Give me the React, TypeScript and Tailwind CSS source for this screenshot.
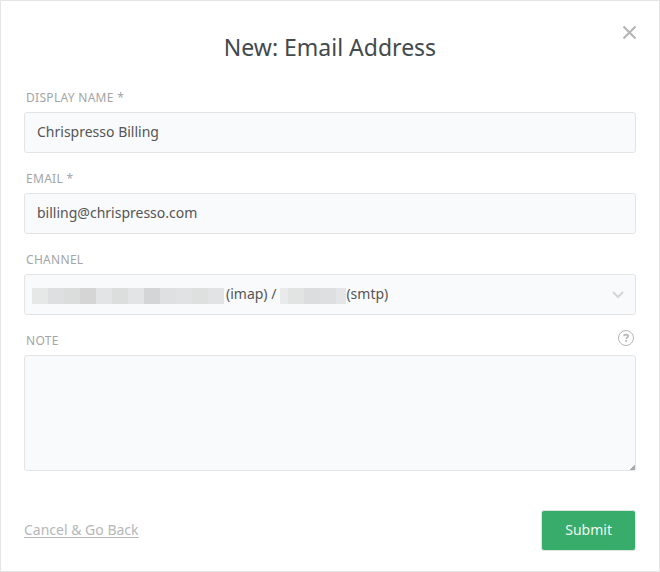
import type { ReactNode } from "react";

const fieldClass =
  "block w-full rounded-[3px] border border-[#e2e4e5] bg-[#f9fafc] px-3 pb-0.5 text-sm text-[#555555] outline-none focus:border-[#38ac6a]";

const channelBlocks = [
  "bg-[#e6e8e7]",
  "bg-[#dedfe1]",
  "bg-[#dbdddc]",
  "bg-[#d5d5d5]",
  "bg-[#e3e4e6]",
  "bg-[#dcdedd]",
  "bg-[#e3e4e6]",
  "bg-[#d4d5d7]",
  "bg-[#dfe0e2]",
  "bg-[#e1e2e4]",
  "bg-[#dee0df]",
  "bg-[#e2e3e5]",
];

type FieldProps = { id: string; label: string; extra?: ReactNode; children: ReactNode };

function Field({ id, label, extra, children }: FieldProps) {
  return (
    <div>
      <div className="mb-1 flex h-5 items-center justify-between px-0.5">
        <label htmlFor={id} className="text-xs leading-5 tracking-wide text-[#a3a5a7] uppercase">
          {label}
        </label>
        {extra}
      </div>
      {children}
    </div>
  );
}

function HelpButton() {
  return (
    <button type="button" aria-label="Help" className="mb-1.5 text-[#b5b5b5]">
      <svg width="16" height="16" viewBox="0 0 16 16" fill="none" stroke="currentColor" className="block">
        <circle cx="8" cy="8" r="7.5" />
        <path d="M5.9 6.2C6 5.1 6.8 4.6 8 4.6c1.300 0 2.100.6 2.100 1.600 0 1.300-1.900 1.300-1.900 2.900" strokeWidth="1.600" />
        <path d="M7.300 10.800h1.700" strokeWidth="1.700" />
      </svg>
    </button>
  );
}

function ChannelSelect() {
  return (
    <div className="relative">
      <select id="channel" className={`${fieldClass} h-[41px] appearance-none text-transparent`}>
        <option>Channel</option>
      </select>
      <div className="pointer-events-none absolute inset-0 flex items-center pr-3 pb-0.5 pl-2 text-sm text-[#555555]">
        <div className="mt-1 flex">
          {channelBlocks.map((color, i) => (
            <span key={i} className={`h-4 w-4 ${color}`} />
          ))}
        </div>
        <span className="ml-0.5">(imap) /</span>
        <div className="mt-1 ml-1 flex">
          <span className="h-4 w-2 bg-[#e9eaec]" />
          <span className="h-4 w-4 bg-[#e2e4e3]" />
          <span className="h-4 w-4 bg-[#dcdddf]" />
          <span className="h-4 w-4 bg-[#dedfe1]" />
          <span className="h-4 w-2.5 bg-[#e4e5e7]" />
        </div>
        <span>(smtp)</span>
        <svg width="12" height="8" viewBox="0 0 12 8" fill="none" stroke="#d3d5d7" strokeWidth="2" className="mt-0.5 ml-auto">
          <path d="M1 1l5 5 5-5" />
        </svg>
      </div>
    </div>
  );
}

export default function App() {
  return (
    <form
      onSubmit={(e) => e.preventDefault()}
      className="relative w-full border border-[#e5e5e5] bg-white px-[23px] pt-[23px] pb-5 font-['Noto_Sans',sans-serif]"
    >
      <button type="button" aria-label="Close" className="absolute top-6 right-[22px] text-[#b3b3b3]">
        <svg width="15" height="15" viewBox="0 0 15 15" fill="none" stroke="currentColor" strokeWidth="2" className="block">
          <path d="M1.500 1.500l12 12M13.500 1.500l-12 12" />
        </svg>
      </button>

      <h1 className="mb-[18px] text-center text-[23px] leading-[46px] text-[#434a4e]">New: Email Address</h1>

      <div className="flex flex-col gap-4">
        <Field id="display-name" label="Display Name *">
          <input id="display-name" type="text" defaultValue="Chrispresso Billing" className={`${fieldClass} h-[41px]`} />
        </Field>
        <Field id="email" label="Email *">
          <input id="email" type="email" defaultValue="billing@chrispresso.com" className={`${fieldClass} h-[41px]`} />
        </Field>
        <Field id="channel" label="Channel">
          <ChannelSelect />
        </Field>
        <Field id="note" label="Note" extra={<HelpButton />}>
          <textarea
            id="note"
            className={`${fieldClass} h-[116px] resize-y pt-2 [&::-webkit-resizer]:bg-[linear-gradient(135deg,transparent_80%,#a9a9a9_80%)]`}
          />
        </Field>
      </div>

      <div className="mt-[39px] flex items-center justify-between">
        <a href="#back" className="pb-0.5 text-sm text-[#b5b7b9] underline underline-offset-2">
          Cancel &amp; Go Back
        </a>
        <button
          type="submit"
          className="h-[41px] rounded-[3px] border border-[#dfe5e2] bg-[#38ac6a] px-[23px] pb-0.5 text-sm text-[#eef8f2]"
        >
          Submit
        </button>
      </div>
    </form>
  );
}
